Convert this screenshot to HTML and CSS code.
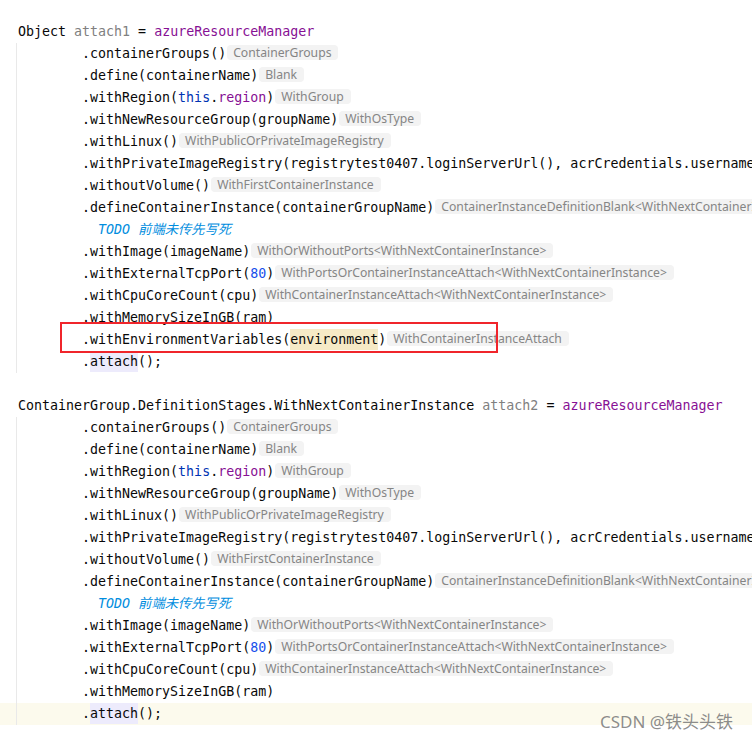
FILE: index.html
```html
<!DOCTYPE html>
<html lang="en">
<head>
    <meta charset="UTF-8" />
    <meta name="viewport" content="width=device-width, initial-scale=1.0" />
    <title>Editor</title>
    <link rel="stylesheet" href="styles.css">
</head>
<body>
    <div class="editor">
        <!-- first statement -->
        <div class="line">Object <span class="unused">attach1</span> = <span class="field">azureResourceManager</span></div>
        <div class="line guide">        .containerGroups()<span class="hint">ContainerGroups</span></div>
        <div class="line guide">        .define(containerName)<span class="hint">Blank</span></div>
        <div class="line guide">        .withRegion(<span class="kw">this</span>.<span class="field">region</span>)<span class="hint">WithGroup</span></div>
        <div class="line guide">        .withNewResourceGroup(groupName)<span class="hint">WithOsType</span></div>
        <div class="line guide">        .withLinux()<span class="hint">WithPublicOrPrivateImageRegistry</span></div>
        <div class="line guide">        .withPrivateImageRegistry(registrytest0407.loginServerUrl(), acrCredentials.username(), acrCredentials.passwords().get(0).value())</div>
        <div class="line guide">        .withoutVolume()<span class="hint">WithFirstContainerInstance</span></div>
        <div class="line guide">        .defineContainerInstance(containerGroupName)<span class="hint">ContainerInstanceDefinitionBlank&lt;WithNextContainerInstance&gt;</span></div>
        <div class="line guide">          <span class="todo">TODO 前端未传先写死</span></div>
        <div class="line guide">        .withImage(imageName)<span class="hint">WithOrWithoutPorts&lt;WithNextContainerInstance&gt;</span></div>
        <div class="line guide">        .withExternalTcpPort(<span class="num">80</span>)<span class="hint">WithPortsOrContainerInstanceAttach&lt;WithNextContainerInstance&gt;</span></div>
        <div class="line guide">        .withCpuCoreCount(cpu)<span class="hint">WithContainerInstanceAttach&lt;WithNextContainerInstance&gt;</span></div>
        <div class="line guide">        .withMemorySizeInGB(ram)</div>
        <div class="line guide">        .withEnvironmentVariables(<span class="usage">environment</span>)<span class="hint">WithContainerInstanceAttach</span></div>
        <div class="line guide">        .<span class="caret-word">attach</span>();</div>
        <div class="line"> </div>

        <!-- second statement -->
        <div class="line">ContainerGroup.DefinitionStages.WithNextContainerInstance <span class="unused">attach2</span> = <span class="field">azureResourceManager</span></div>
        <div class="line guide">        .containerGroups()<span class="hint">ContainerGroups</span></div>
        <div class="line guide">        .define(containerName)<span class="hint">Blank</span></div>
        <div class="line guide">        .withRegion(<span class="kw">this</span>.<span class="field">region</span>)<span class="hint">WithGroup</span></div>
        <div class="line guide">        .withNewResourceGroup(groupName)<span class="hint">WithOsType</span></div>
        <div class="line guide">        .withLinux()<span class="hint">WithPublicOrPrivateImageRegistry</span></div>
        <div class="line guide">        .withPrivateImageRegistry(registrytest0407.loginServerUrl(), acrCredentials.username(), acrCredentials.passwords().get(0).value())</div>
        <div class="line guide">        .withoutVolume()<span class="hint">WithFirstContainerInstance</span></div>
        <div class="line guide">        .defineContainerInstance(containerGroupName)<span class="hint">ContainerInstanceDefinitionBlank&lt;WithNextContainerInstance&gt;</span></div>
        <div class="line guide">          <span class="todo">TODO 前端未传先写死</span></div>
        <div class="line guide">        .withImage(imageName)<span class="hint">WithOrWithoutPorts&lt;WithNextContainerInstance&gt;</span></div>
        <div class="line guide">        .withExternalTcpPort(<span class="num">80</span>)<span class="hint">WithPortsOrContainerInstanceAttach&lt;WithNextContainerInstance&gt;</span></div>
        <div class="line guide">        .withCpuCoreCount(cpu)<span class="hint">WithContainerInstanceAttach&lt;WithNextContainerInstance&gt;</span></div>
        <div class="line guide">        .withMemorySizeInGB(ram)</div>
        <div class="line guide current">        .<span class="caret-word">attach</span>();</div>

        <!-- annotation box drawn over the code -->
        <div class="mark"></div>
        <div class="watermark">CSDN @铁头头铁</div>
    </div>
</body>
</html>
```

FILE: styles.css
```css
body {
    margin: 0;
    background-color: #ffffff;
}

.editor {
    position: relative;
    height: 739px;
    padding-top: 21px;
    box-sizing: border-box;
    overflow: hidden;
    font-family: "DejaVu Sans Mono", "Noto Sans CJK SC", monospace;
    font-size: 13.3px;
    color: #080808;
}

.line {
    height: 22px;
    line-height: 22px;
    padding-left: 18px;
    white-space: pre;
}

/* indent guide */
.guide {
    background: linear-gradient(#e9e9e9, #e9e9e9) 16px 0 / 1px 100% no-repeat;
}

.current {
    background: linear-gradient(#e9e9e9, #e9e9e9) 16px 0 / 1px 100% no-repeat, #fcfaed;
}

.unused {
    color: #808080;
}

.field {
    color: #871094;
}

.kw {
    color: #0033b3;
}

.num {
    color: #1750eb;
}

.todo {
    color: #008dde;
    font-style: italic;
}

.usage {
    display: inline-block;
    line-height: 21px;
    background-color: #f6eac6;
}

.caret-word {
    display: inline-block;
    line-height: 21px;
    background-color: #edebfc;
}

/* inlay hints */
.hint {
    display: inline-block;
    margin-left: 1px;
    padding: 0 7px 0 6px;
    height: 15px;
    line-height: 15px;
    vertical-align: 1px;
    border-radius: 4px;
    background-color: #f3f3f3;
    color: #858585;
    font-family: "Noto Sans", sans-serif;
    font-size: 12.2px;
}

.mark {
    position: absolute;
    left: 60px;
    top: 322px;
    width: 434px;
    height: 27px;
    border: 2px solid #f0252b;
}

.watermark {
    position: absolute;
    left: 600px;
    top: 708px;
    font-family: "Noto Sans", "Noto Sans CJK SC", sans-serif;
    font-size: 17px;
    color: rgba(120, 120, 120, 0.85);
}
```
